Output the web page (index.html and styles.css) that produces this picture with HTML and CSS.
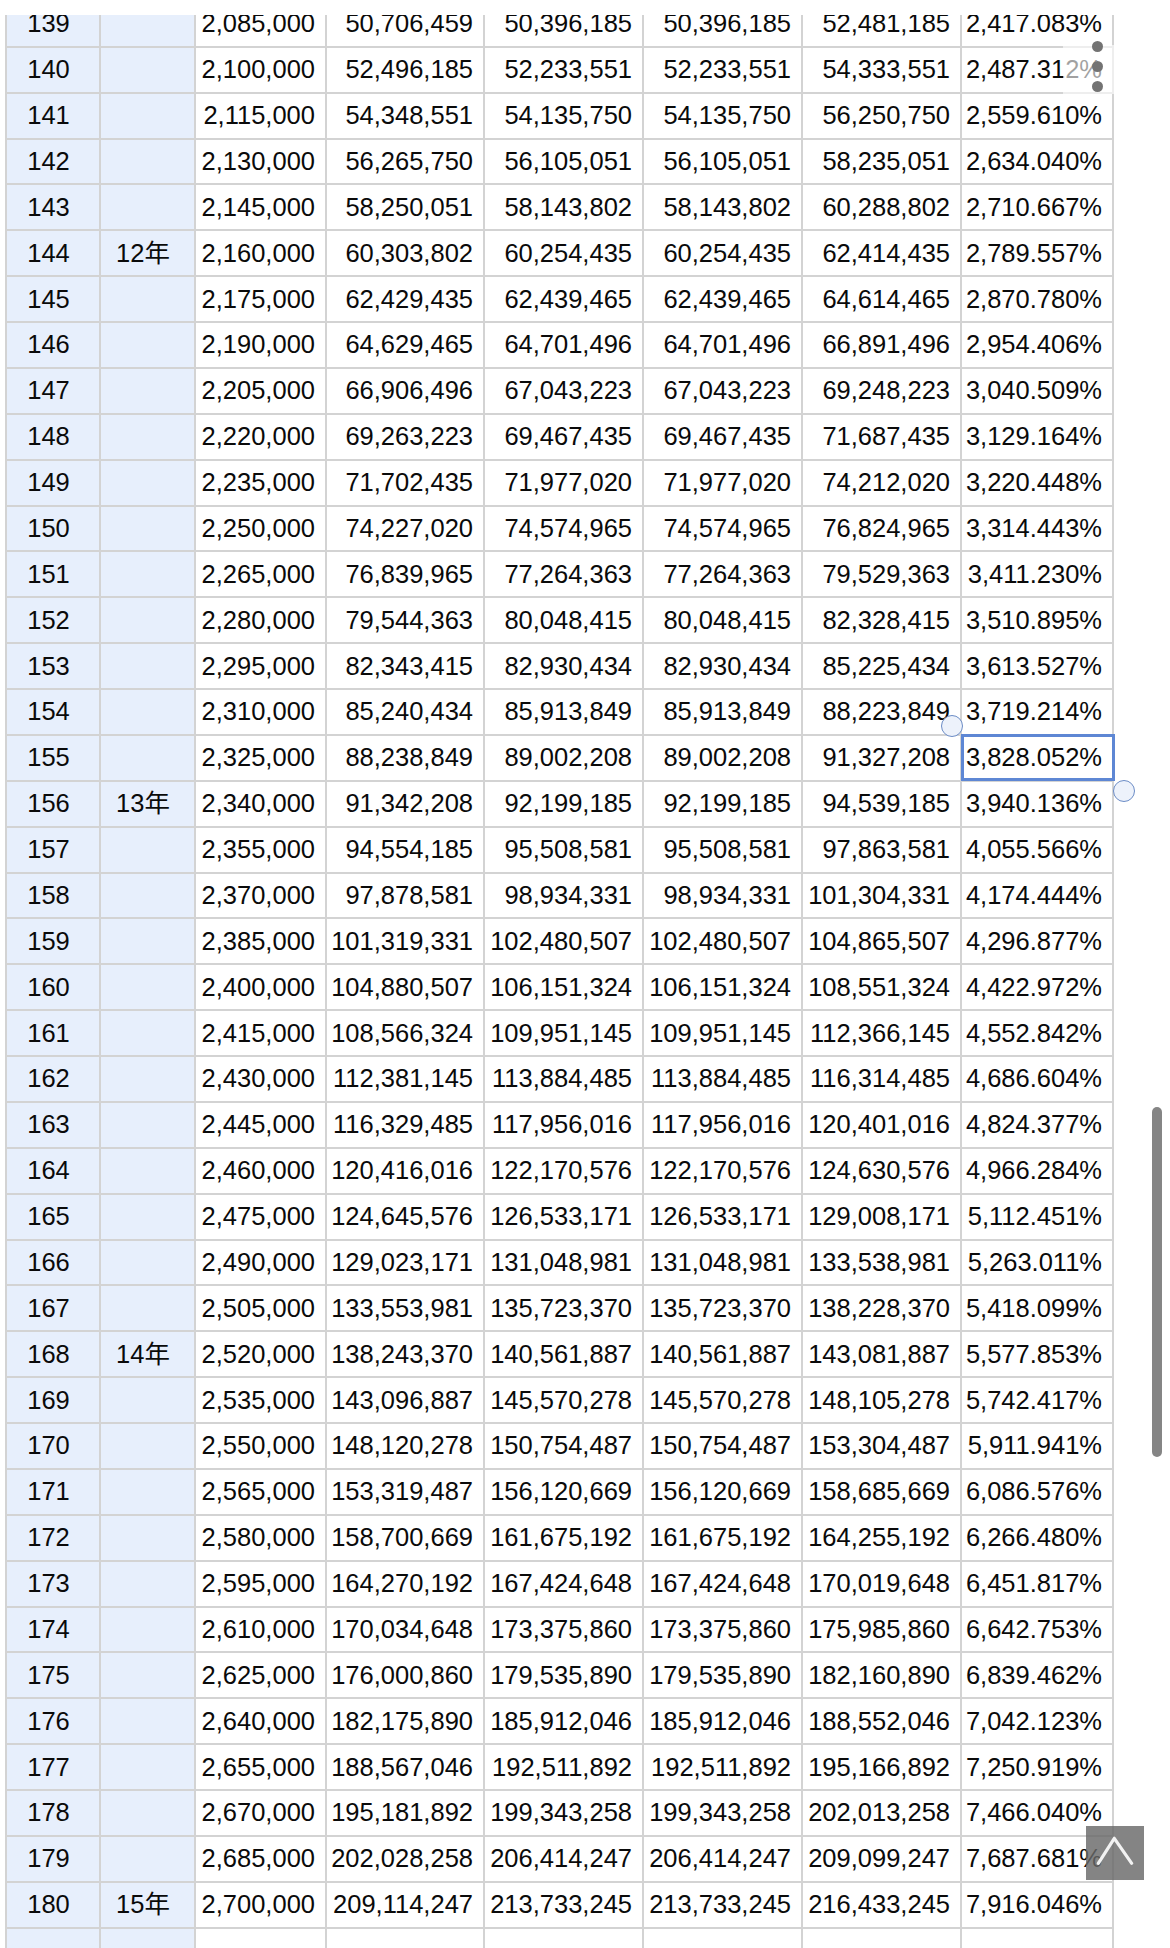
FILE: index.html
```html
<!DOCTYPE html>
<html lang="ja">
<head>
<meta charset="utf-8">
<title>Sheet</title>
<link rel="stylesheet" href="styles.css">
</head>
<body>
<div class="viewport">
<div class="sheet">
<div class="row"><div class="c k">139</div><div class="c k"></div><div class="c">2,085,000</div><div class="c">50,706,459</div><div class="c">50,396,185</div><div class="c">50,396,185</div><div class="c">52,481,185</div><div class="c">2,417.083%</div></div>
<div class="row"><div class="c k">140</div><div class="c k"></div><div class="c">2,100,000</div><div class="c">52,496,185</div><div class="c">52,233,551</div><div class="c">52,233,551</div><div class="c">54,333,551</div><div class="c">2,487.312%</div></div>
<div class="row"><div class="c k">141</div><div class="c k"></div><div class="c">2,115,000</div><div class="c">54,348,551</div><div class="c">54,135,750</div><div class="c">54,135,750</div><div class="c">56,250,750</div><div class="c">2,559.610%</div></div>
<div class="row"><div class="c k">142</div><div class="c k"></div><div class="c">2,130,000</div><div class="c">56,265,750</div><div class="c">56,105,051</div><div class="c">56,105,051</div><div class="c">58,235,051</div><div class="c">2,634.040%</div></div>
<div class="row"><div class="c k">143</div><div class="c k"></div><div class="c">2,145,000</div><div class="c">58,250,051</div><div class="c">58,143,802</div><div class="c">58,143,802</div><div class="c">60,288,802</div><div class="c">2,710.667%</div></div>
<div class="row"><div class="c k">144</div><div class="c k">12年</div><div class="c">2,160,000</div><div class="c">60,303,802</div><div class="c">60,254,435</div><div class="c">60,254,435</div><div class="c">62,414,435</div><div class="c">2,789.557%</div></div>
<div class="row"><div class="c k">145</div><div class="c k"></div><div class="c">2,175,000</div><div class="c">62,429,435</div><div class="c">62,439,465</div><div class="c">62,439,465</div><div class="c">64,614,465</div><div class="c">2,870.780%</div></div>
<div class="row"><div class="c k">146</div><div class="c k"></div><div class="c">2,190,000</div><div class="c">64,629,465</div><div class="c">64,701,496</div><div class="c">64,701,496</div><div class="c">66,891,496</div><div class="c">2,954.406%</div></div>
<div class="row"><div class="c k">147</div><div class="c k"></div><div class="c">2,205,000</div><div class="c">66,906,496</div><div class="c">67,043,223</div><div class="c">67,043,223</div><div class="c">69,248,223</div><div class="c">3,040.509%</div></div>
<div class="row"><div class="c k">148</div><div class="c k"></div><div class="c">2,220,000</div><div class="c">69,263,223</div><div class="c">69,467,435</div><div class="c">69,467,435</div><div class="c">71,687,435</div><div class="c">3,129.164%</div></div>
<div class="row"><div class="c k">149</div><div class="c k"></div><div class="c">2,235,000</div><div class="c">71,702,435</div><div class="c">71,977,020</div><div class="c">71,977,020</div><div class="c">74,212,020</div><div class="c">3,220.448%</div></div>
<div class="row"><div class="c k">150</div><div class="c k"></div><div class="c">2,250,000</div><div class="c">74,227,020</div><div class="c">74,574,965</div><div class="c">74,574,965</div><div class="c">76,824,965</div><div class="c">3,314.443%</div></div>
<div class="row"><div class="c k">151</div><div class="c k"></div><div class="c">2,265,000</div><div class="c">76,839,965</div><div class="c">77,264,363</div><div class="c">77,264,363</div><div class="c">79,529,363</div><div class="c">3,411.230%</div></div>
<div class="row"><div class="c k">152</div><div class="c k"></div><div class="c">2,280,000</div><div class="c">79,544,363</div><div class="c">80,048,415</div><div class="c">80,048,415</div><div class="c">82,328,415</div><div class="c">3,510.895%</div></div>
<div class="row"><div class="c k">153</div><div class="c k"></div><div class="c">2,295,000</div><div class="c">82,343,415</div><div class="c">82,930,434</div><div class="c">82,930,434</div><div class="c">85,225,434</div><div class="c">3,613.527%</div></div>
<div class="row"><div class="c k">154</div><div class="c k"></div><div class="c">2,310,000</div><div class="c">85,240,434</div><div class="c">85,913,849</div><div class="c">85,913,849</div><div class="c">88,223,849</div><div class="c">3,719.214%</div></div>
<div class="row"><div class="c k">155</div><div class="c k"></div><div class="c">2,325,000</div><div class="c">88,238,849</div><div class="c">89,002,208</div><div class="c">89,002,208</div><div class="c">91,327,208</div><div class="c">3,828.052%</div></div>
<div class="row"><div class="c k">156</div><div class="c k">13年</div><div class="c">2,340,000</div><div class="c">91,342,208</div><div class="c">92,199,185</div><div class="c">92,199,185</div><div class="c">94,539,185</div><div class="c">3,940.136%</div></div>
<div class="row"><div class="c k">157</div><div class="c k"></div><div class="c">2,355,000</div><div class="c">94,554,185</div><div class="c">95,508,581</div><div class="c">95,508,581</div><div class="c">97,863,581</div><div class="c">4,055.566%</div></div>
<div class="row"><div class="c k">158</div><div class="c k"></div><div class="c">2,370,000</div><div class="c">97,878,581</div><div class="c">98,934,331</div><div class="c">98,934,331</div><div class="c">101,304,331</div><div class="c">4,174.444%</div></div>
<div class="row"><div class="c k">159</div><div class="c k"></div><div class="c">2,385,000</div><div class="c">101,319,331</div><div class="c">102,480,507</div><div class="c">102,480,507</div><div class="c">104,865,507</div><div class="c">4,296.877%</div></div>
<div class="row"><div class="c k">160</div><div class="c k"></div><div class="c">2,400,000</div><div class="c">104,880,507</div><div class="c">106,151,324</div><div class="c">106,151,324</div><div class="c">108,551,324</div><div class="c">4,422.972%</div></div>
<div class="row"><div class="c k">161</div><div class="c k"></div><div class="c">2,415,000</div><div class="c">108,566,324</div><div class="c">109,951,145</div><div class="c">109,951,145</div><div class="c">112,366,145</div><div class="c">4,552.842%</div></div>
<div class="row"><div class="c k">162</div><div class="c k"></div><div class="c">2,430,000</div><div class="c">112,381,145</div><div class="c">113,884,485</div><div class="c">113,884,485</div><div class="c">116,314,485</div><div class="c">4,686.604%</div></div>
<div class="row"><div class="c k">163</div><div class="c k"></div><div class="c">2,445,000</div><div class="c">116,329,485</div><div class="c">117,956,016</div><div class="c">117,956,016</div><div class="c">120,401,016</div><div class="c">4,824.377%</div></div>
<div class="row"><div class="c k">164</div><div class="c k"></div><div class="c">2,460,000</div><div class="c">120,416,016</div><div class="c">122,170,576</div><div class="c">122,170,576</div><div class="c">124,630,576</div><div class="c">4,966.284%</div></div>
<div class="row"><div class="c k">165</div><div class="c k"></div><div class="c">2,475,000</div><div class="c">124,645,576</div><div class="c">126,533,171</div><div class="c">126,533,171</div><div class="c">129,008,171</div><div class="c">5,112.451%</div></div>
<div class="row"><div class="c k">166</div><div class="c k"></div><div class="c">2,490,000</div><div class="c">129,023,171</div><div class="c">131,048,981</div><div class="c">131,048,981</div><div class="c">133,538,981</div><div class="c">5,263.011%</div></div>
<div class="row"><div class="c k">167</div><div class="c k"></div><div class="c">2,505,000</div><div class="c">133,553,981</div><div class="c">135,723,370</div><div class="c">135,723,370</div><div class="c">138,228,370</div><div class="c">5,418.099%</div></div>
<div class="row"><div class="c k">168</div><div class="c k">14年</div><div class="c">2,520,000</div><div class="c">138,243,370</div><div class="c">140,561,887</div><div class="c">140,561,887</div><div class="c">143,081,887</div><div class="c">5,577.853%</div></div>
<div class="row"><div class="c k">169</div><div class="c k"></div><div class="c">2,535,000</div><div class="c">143,096,887</div><div class="c">145,570,278</div><div class="c">145,570,278</div><div class="c">148,105,278</div><div class="c">5,742.417%</div></div>
<div class="row"><div class="c k">170</div><div class="c k"></div><div class="c">2,550,000</div><div class="c">148,120,278</div><div class="c">150,754,487</div><div class="c">150,754,487</div><div class="c">153,304,487</div><div class="c">5,911.941%</div></div>
<div class="row"><div class="c k">171</div><div class="c k"></div><div class="c">2,565,000</div><div class="c">153,319,487</div><div class="c">156,120,669</div><div class="c">156,120,669</div><div class="c">158,685,669</div><div class="c">6,086.576%</div></div>
<div class="row"><div class="c k">172</div><div class="c k"></div><div class="c">2,580,000</div><div class="c">158,700,669</div><div class="c">161,675,192</div><div class="c">161,675,192</div><div class="c">164,255,192</div><div class="c">6,266.480%</div></div>
<div class="row"><div class="c k">173</div><div class="c k"></div><div class="c">2,595,000</div><div class="c">164,270,192</div><div class="c">167,424,648</div><div class="c">167,424,648</div><div class="c">170,019,648</div><div class="c">6,451.817%</div></div>
<div class="row"><div class="c k">174</div><div class="c k"></div><div class="c">2,610,000</div><div class="c">170,034,648</div><div class="c">173,375,860</div><div class="c">173,375,860</div><div class="c">175,985,860</div><div class="c">6,642.753%</div></div>
<div class="row"><div class="c k">175</div><div class="c k"></div><div class="c">2,625,000</div><div class="c">176,000,860</div><div class="c">179,535,890</div><div class="c">179,535,890</div><div class="c">182,160,890</div><div class="c">6,839.462%</div></div>
<div class="row"><div class="c k">176</div><div class="c k"></div><div class="c">2,640,000</div><div class="c">182,175,890</div><div class="c">185,912,046</div><div class="c">185,912,046</div><div class="c">188,552,046</div><div class="c">7,042.123%</div></div>
<div class="row"><div class="c k">177</div><div class="c k"></div><div class="c">2,655,000</div><div class="c">188,567,046</div><div class="c">192,511,892</div><div class="c">192,511,892</div><div class="c">195,166,892</div><div class="c">7,250.919%</div></div>
<div class="row"><div class="c k">178</div><div class="c k"></div><div class="c">2,670,000</div><div class="c">195,181,892</div><div class="c">199,343,258</div><div class="c">199,343,258</div><div class="c">202,013,258</div><div class="c">7,466.040%</div></div>
<div class="row"><div class="c k">179</div><div class="c k"></div><div class="c">2,685,000</div><div class="c">202,028,258</div><div class="c">206,414,247</div><div class="c">206,414,247</div><div class="c">209,099,247</div><div class="c">7,687.681%</div></div>
<div class="row"><div class="c k">180</div><div class="c k">15年</div><div class="c">2,700,000</div><div class="c">209,114,247</div><div class="c">213,733,245</div><div class="c">213,733,245</div><div class="c">216,433,245</div><div class="c">7,916.046%</div></div>
<div class="row"><div class="c k"></div><div class="c k"></div><div class="c"></div><div class="c"></div><div class="c"></div><div class="c"></div><div class="c"></div><div class="c"></div></div>
</div>
</div>

<div class="dots-bg"></div>
<div class="dots"><span class="dot"></span><span class="dot"></span><span class="dot"></span></div>
<div class="selection"></div>
<div class="handle handle-a"></div>
<div class="handle handle-b"></div>
<div class="scrollbar"></div>
<div class="totop">
<svg width="58" height="54" viewBox="0 0 58 54"><polyline points="12.3,37.3 28.3,12.3 45.7,37.3" fill="none" stroke="#f2f2f2" stroke-width="3.2" stroke-linecap="round" stroke-linejoin="round"/></svg>
</div>
</body>
</html>
```
FILE: styles.css
```css
html, body {
  margin: 0;
  padding: 0;
  background: #ffffff;
}
body {
  width: 1170px;
  height: 1948px;
  overflow: hidden;
  font-family: "Liberation Sans", Arial, "Noto Sans CJK JP", sans-serif;
  color: #0a0a0a;
}
.viewport {
  margin-top: 15px;
  height: 1933px;
  overflow: hidden;
}
.sheet {
  margin-top: -13.1px;
  margin-left: 5px;
  display: grid;
  grid-template-columns: 92px 93px 129px 156px 157px 157px 157px 150px;
  grid-auto-rows: 43.89px;
  column-gap: 2px;
  row-gap: 2px;
  padding: 0 2px;
  background: #d3d3d3;
  width: max-content;
}
.row {
  display: contents;
}
.c {
  background: #ffffff;
  display: flex;
  align-items: center;
  justify-content: flex-end;
  padding-right: 10px;
  font-size: 25.5px;
  line-height: 29px;
  white-space: nowrap;
  overflow: hidden;
}
.c.k {
  background: #e7effc;
  justify-content: center;
  padding-right: 9px;
}
.dots-bg {
  position: absolute;
  left: 1063px;
  top: 45px;
  width: 54px;
  height: 49px;
  background: rgba(255, 255, 255, 0.62);
}
.dots {
  position: absolute;
  left: 1092px;
  top: 41px;
  width: 11px;
  display: flex;
  flex-direction: column;
  gap: 9px;
}
.dot {
  display: block;
  width: 11px;
  height: 11px;
  border-radius: 50%;
  background: #737373;
}
.selection {
  position: absolute;
  left: 961px;
  top: 734px;
  width: 148px;
  height: 41px;
  border: 3px solid #5e87d4;
}
.handle {
  position: absolute;
  width: 20px;
  height: 20px;
  border-radius: 50%;
  background: #edf2fb;
  border: 1.5px solid #6b8cc6;
}
.handle-a {
  left: 940.5px;
  top: 714.5px;
}
.handle-b {
  left: 1112.5px;
  top: 779.5px;
}
.scrollbar {
  position: absolute;
  left: 1152px;
  top: 1107px;
  width: 10px;
  height: 350px;
  border-radius: 5px;
  background: #858585;
}
.totop {
  position: absolute;
  left: 1086px;
  top: 1826px;
  width: 58px;
  height: 54px;
  background: rgba(105, 105, 105, 0.82);
}
.totop svg {
  display: block;
}
```
